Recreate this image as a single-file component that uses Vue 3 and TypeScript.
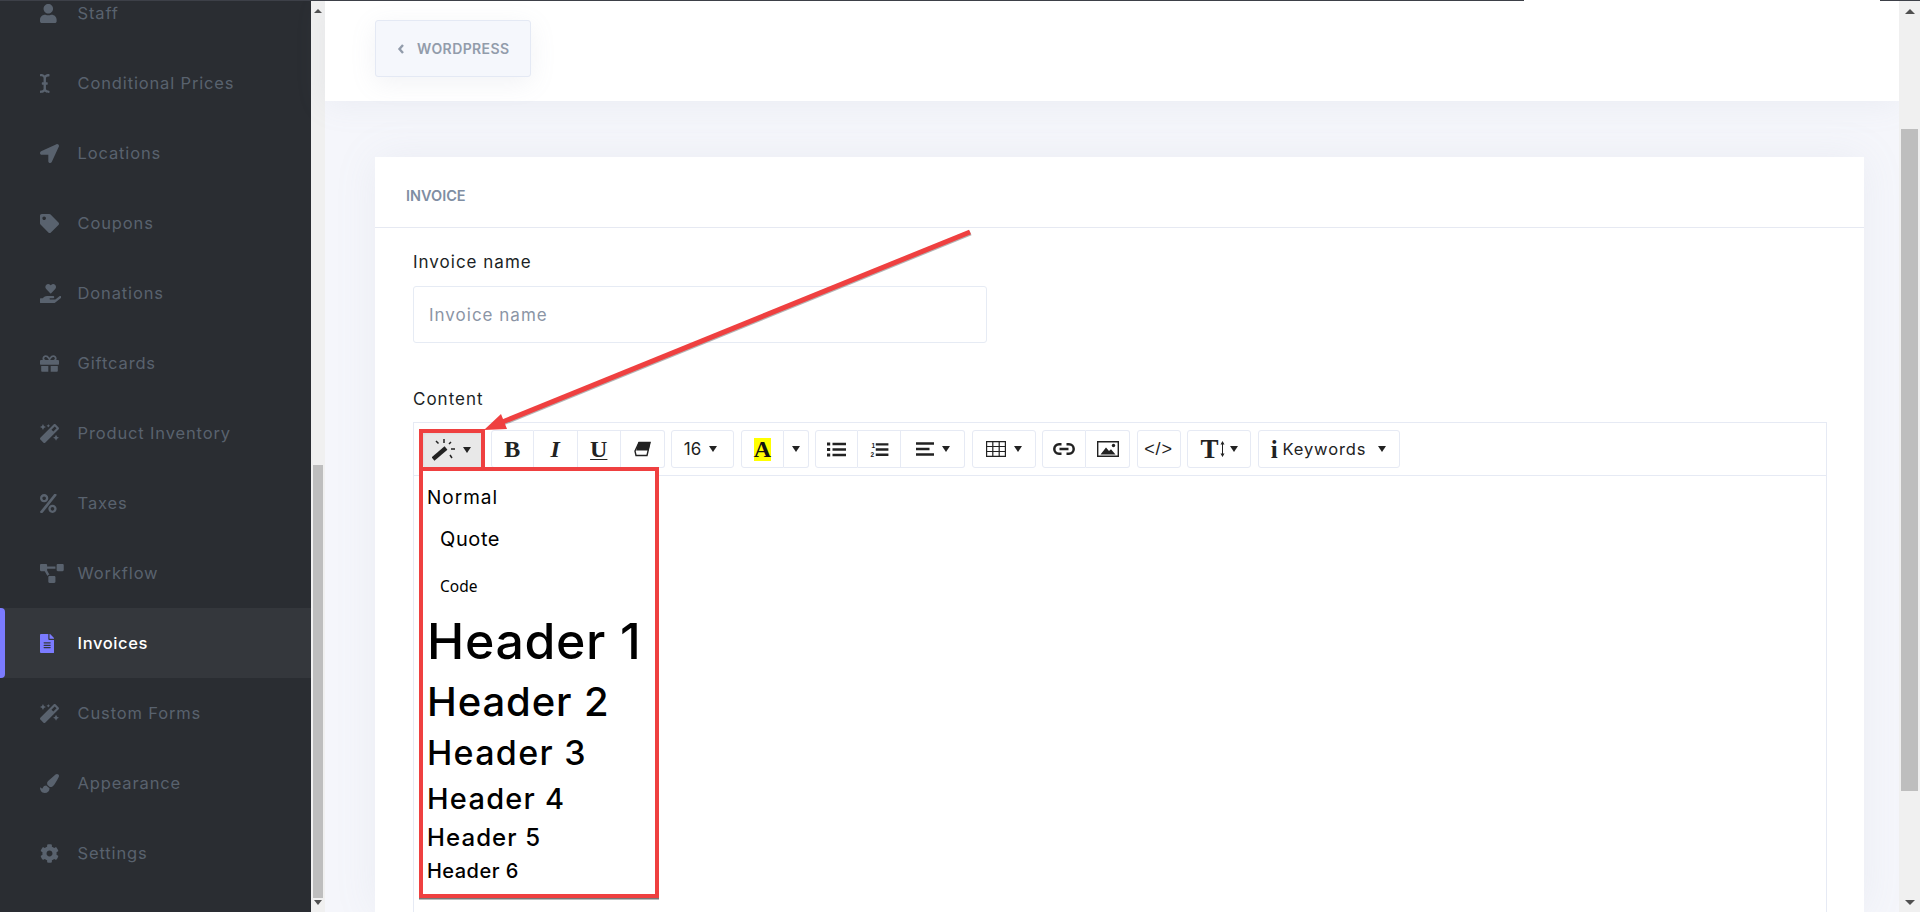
<script setup lang="ts">
interface NavItem { label: string; box: string; d: string; active?: boolean }
const magic = 'M224 96l16-32 32-16-32-16-16-32-16 32-32 16 32 16 16 32zM80 160l26.66-53.33L160 80l-53.34-26.67L80 0 53.34 53.33 0 80l53.34 26.67L80 160zm352 128l-26.66 53.33L352 368l53.34 26.67L432 448l26.66-53.33L512 368l-53.34-26.67L432 288zm70.62-193.77L417.77 9.38C411.53 3.12 403.34 0 395.15 0c-8.19 0-16.38 3.12-22.63 9.38L9.38 372.52c-12.5 12.5-12.5 32.76 0 45.25l84.85 84.85c6.25 6.25 14.44 9.37 22.62 9.37 8.19 0 16.38-3.12 22.63-9.37l363.14-363.15c12.5-12.48 12.5-32.75 0-45.24zM359.45 203.46l-50.91-50.91 86.6-86.6 50.91 50.91-86.6 86.6z'
const nav: NavItem[] = [
  { label: 'Staff', box: '0 0 448 512', d: 'M224 256c70.7 0 128-57.3 128-128S294.7 0 224 0 96 57.3 96 128s57.3 128 128 128zm89.6 32h-16.7c-22.2 10.2-46.9 16-72.9 16s-50.6-5.8-72.9-16h-16.7C60.2 288 0 348.2 0 422.4V464c0 26.5 21.5 48 48 48h352c26.5 0 48-21.5 48-48v-41.6c0-74.2-60.2-134.4-134.4-134.4z' },
  { label: 'Conditional Prices', box: '0 0 256 512', d: 'M256 52.048V12.065C256 5.496 250.726.148 244.158.066 211.621-.344 166.469.011 128 37.959 90.266.736 46.979-.114 11.913.114 5.318.157 0 5.519 0 12.114v39.645c0 6.687 5.458 12.078 12.145 11.998C38.111 63.447 96 67.243 96 112.182V224H60c-6.627 0-12 5.373-12 12v40c0 6.627 5.373 12 12 12h36v112c0 44.932-56.075 48.031-83.95 47.959C5.404 447.942 0 453.306 0 459.952v39.983c0 6.569 5.274 11.917 11.842 11.999 32.537.409 77.689.054 116.158-37.894 37.734 37.223 81.021 38.073 116.087 37.845 6.595-.043 11.913-5.405 11.913-12V460.24c0-6.687-5.458-12.078-12.145-11.998C217.889 448.553 160 444.939 160 400V288h36c6.627 0 12-5.373 12-12v-40c0-6.627-5.373-12-12-12h-36V112.182c0-44.932 56.075-48.213 83.95-48.142 6.646.018 12.05-5.346 12.05-11.992z' },
  { label: 'Locations', box: '0 0 512 512', d: 'M444.52 3.52L28.74 195.42c-47.97 22.39-31.98 92.75 19.19 92.75h175.91v175.91c0 51.17 70.36 67.17 92.75 19.19l191.9-415.78c15.99-38.39-25.59-79.97-63.97-63.97z' },
  { label: 'Coupons', box: '0 0 512 512', d: 'M0 252.118V48C0 21.49 21.49 0 48 0h204.118a48 48 0 0 1 33.941 14.059l211.882 211.882c18.745 18.745 18.745 49.137 0 67.882L293.823 497.941c-18.745 18.745-49.137 18.745-67.882 0L14.059 286.059A48 48 0 0 1 0 252.118zM112 64c-26.51 0-48 21.49-48 48s21.49 48 48 48 48-21.49 48-48-21.49-48-48-48z' },
  { label: 'Donations', box: '0 0 576 512', d: 'M275.3 250.5c7 7.4 18.4 7.4 25.5 0l108.9-114.2c31.6-33.2 29.8-88.2-5.6-118.8-30.8-26.7-76.7-21.9-104.9 7.7L288 36.9l-11.1-11.6C248.7-4.4 202.8-9.2 172 17.5c-35.3 30.6-37.2 85.6-5.6 118.8l108.9 114.2zm290 77.6c-11.8-10.7-30.2-10-42.6 0L430.3 402c-11.3 9.1-25.4 14-40 14H272c-8.8 0-16-7.2-16-16s7.2-16 16-16h78.3c15.9 0 30.7-10.9 33.3-26.6 3.3-20-12.1-37.4-31.6-37.4H192c-27 0-53.1 9.3-74.1 26.3L71.4 384H16c-8.8 0-16 7.2-16 16v96c0 8.8 7.2 16 16 16h356.8c14.5 0 28.6-4.9 40-14L564 377c15.2-12.1 16.4-35.3 1.3-48.9z' },
  { label: 'Giftcards', box: '0 0 512 512', d: 'M32 448c0 17.7 14.3 32 32 32h160V320H32v128zm256 32h160c17.7 0 32-14.3 32-32V320H288v160zm192-320h-42.1c6.2-12.1 10.1-25.5 10.1-40 0-48.5-39.5-88-88-88-41.6 0-68.5 21.3-103 68.3-34.5-47-61.4-68.3-103-68.3-48.5 0-88 39.5-88 88 0 14.5 3.8 27.9 10.1 40H32c-17.7 0-32 14.3-32 32v80c0 8.8 7.2 16 16 16h480c8.8 0 16-7.2 16-16v-80c0-17.7-14.3-32-32-32zm-326.1 0c-22.1 0-40-17.9-40-40s17.9-40 40-40c19.9 0 34.6 3.3 86.1 80h-86.1zm206.1 0h-86.1c51.4-76.5 65.7-80 86.1-80 22.1 0 40 17.9 40 40s-17.9 40-40 40z' },
  { label: 'Product Inventory', box: '0 0 512 512', d: magic },
  { label: 'Taxes', box: '0 0 448 512', d: 'M112 224c61.9 0 112-50.1 112-112S173.9 0 112 0 0 50.1 0 112s50.1 112 112 112zm0-160c26.5 0 48 21.5 48 48s-21.5 48-48 48-48-21.5-48-48 21.5-48 48-48zm224 224c-61.9 0-112 50.1-112 112s50.1 112 112 112 112-50.1 112-112-50.1-112-112-112zm0 160c-26.5 0-48-21.5-48-48s21.5-48 48-48 48 21.5 48 48-21.5 48-48 48zM392.3.2l31.6-.1c19.4-.1 30.9 21.8 19.7 37.8L77.4 501.6a23.95 23.95 0 0 1-19.6 10.2l-33.4.1c-19.5 0-30.9-21.9-19.7-37.8l368-463.7C377.2 4 384.5.2 392.3.2z' },
  { label: 'Workflow', box: '0 0 640 512', d: 'M384 320H256c-17.67 0-32 14.33-32 32v128c0 17.67 14.33 32 32 32h128c17.67 0 32-14.33 32-32V352c0-17.67-14.33-32-32-32zM192 32c0-17.67-14.33-32-32-32H32C14.33 0 0 14.33 0 32v128c0 17.67 14.33 32 32 32h95.72l73.16 128.04C211.98 300.98 232.4 288 256 288h.28L192 175.51V128h224V64H192V32zM608 0H480c-17.67 0-32 14.33-32 32v128c0 17.67 14.33 32 32 32h128c17.67 0 32-14.33 32-32V32c0-17.67-14.33-32-32-32z' },
  { label: 'Invoices', box: '0 0 384 512', active: true, d: 'M224 136V0H24C10.7 0 0 10.7 0 24v464c0 13.3 10.7 24 24 24h336c13.3 0 24-10.7 24-24V160H248c-13.2 0-24-10.8-24-24zm64 236c0 6.6-5.4 12-12 12H108c-6.6 0-12-5.4-12-12v-8c0-6.6 5.4-12 12-12h168c6.6 0 12 5.4 12 12v8zm0-64c0 6.6-5.4 12-12 12H108c-6.6 0-12-5.4-12-12v-8c0-6.6 5.4-12 12-12h168c6.6 0 12 5.4 12 12v8zm0-72v8c0 6.6-5.4 12-12 12H108c-6.6 0-12-5.4-12-12v-8c0-6.6 5.4-12 12-12h168c6.6 0 12 5.4 12 12zm96-114.1v6.1H256V0h6.1c6.4 0 12.5 2.5 17 7l97.9 98c4.5 4.5 7 10.6 7 16.9z' },
  { label: 'Custom Forms', box: '0 0 512 512', d: magic },
  { label: 'Appearance', box: '0 0 512 512', d: 'M167.02 309.34c-40.12 2.58-76.53 17.86-97.19 72.3-2.35 6.21-8 9.98-14.59 9.98-11.11 0-45.46-27.67-55.25-34.35C0 439.62 37.93 512 128 512c75.86 0 128-43.77 128-120.19 0-3.11-.65-6.08-.97-9.13l-88.01-73.34zM457.89 0c-15.16 0-29.37 6.71-40.21 16.45C213.27 199.05 192 203.34 192 257.09c0 13.7 3.25 26.76 8.73 38.7l63.82 53.18c7.21 1.8 14.64 3.03 22.39 3.03 62.11 0 98.11-45.47 211.16-256.46 7.38-14.35 13.9-29.85 13.9-45.99C512 20.64 486 0 457.89 0z' },
  { label: 'Settings', box: '0 0 512 512', d: 'M487.4 315.7l-42.6-24.6c4.3-23.2 4.3-47 0-70.2l42.6-24.6c4.9-2.8 7.1-8.6 5.5-14-11.1-35.6-30-67.8-54.7-94.6-3.8-4.1-10-5.1-14.8-2.3L380.8 110c-17.9-15.4-38.5-27.3-60.8-35.1V25.8c0-5.6-3.9-10.5-9.4-11.7-36.7-8.2-74.3-7.8-109.2 0-5.5 1.2-9.4 6.1-9.4 11.7V75c-22.2 7.9-42.8 19.8-60.8 35.1L88.7 85.5c-4.9-2.8-11-1.9-14.8 2.3-24.7 26.7-43.6 58.9-54.7 94.6-1.7 5.4.6 11.2 5.5 14L67.3 221c-4.3 23.2-4.3 47 0 70.2l-42.6 24.6c-4.9 2.8-7.1 8.6-5.5 14 11.1 35.6 30 67.8 54.7 94.6 3.8 4.1 10 5.1 14.8 2.3l42.6-24.6c17.9 15.4 38.5 27.3 60.8 35.1v49.2c0 5.6 3.9 10.5 9.4 11.7 36.7 8.2 74.3 7.8 109.2 0 5.5-1.2 9.4-6.1 9.4-11.7v-49.2c22.2-7.9 42.8-19.8 60.8-35.1l42.6 24.6c4.9 2.8 11 1.9 14.8-2.3 24.7-26.7 43.6-58.9 54.7-94.6 1.5-5.5-.7-11.3-5.6-14.1zM256 336c-44.1 0-80-35.9-80-80s35.9-80 80-80 80 35.9 80 80-35.9 80-80 80z' }
]
</script>

<template>
  <div class="page">
    <aside class="sidebar">
      <nav class="nav">
        <a v-for="item in nav" :key="item.label" class="nav-row" :class="{ active: item.active }">
          <span class="nav-icon"><svg :viewBox="item.box"><path :d="item.d" fill="currentColor" /></svg></span>
          <span>{{ item.label }}</span>
        </a>
      </nav>
    </aside>
    <div class="bar bar-side"><i class="up"></i><div class="thumb"></div><i class="down"></i></div>

    <main class="main">
      <header class="head">
        <button class="back"><svg viewBox="0 0 8 12"><path d="M6 2 2.5 6 6 10" fill="none" stroke="currentColor" stroke-width="2.4" /></svg>WORDPRESS</button>
      </header>
      <div class="content">
        <section class="card">
          <div class="card-title">INVOICE</div>
          <div class="card-body">
            <label class="lbl">Invoice name</label>
            <div class="input">Invoice name</div>
            <label class="lbl lbl2">Content</label>
            <div class="editor">
              <div class="toolbar">
                <div class="grp"><button class="b on w-style">
                  <svg class="wand" viewBox="0 0 24 24"><path d="M1 21 14 10" stroke="#222" stroke-width="4.4" fill="none" /><path d="M12 1v4M4 3l2.5 2.5M19 11h4M18 17l2 3M19 4l-2 2" stroke="#222" stroke-width="1.5" fill="none" /></svg>
                  <i class="caret caret-w"></i></button></div>
                <div class="grp">
                  <button class="b w-b ser bold">B</button>
                  <button class="b w-b ser ital">I</button>
                  <button class="b w-b ser bold und">U</button>
                  <button class="b w-b"><svg class="ic16" viewBox="0 0 17 16"><path d="M5 1.5h11L13 14.5H2L1 10z" fill="none" stroke="#222" stroke-width="1.4"/><path d="M4.5 1h12l-2 8.5H2.2z" fill="#222"/></svg></button>
                </div>
                <div class="grp"><button class="b w-size"><span class="sz">16</span><i class="caret"></i></button></div>
                <div class="grp">
                  <button class="b w-b"><span class="hl">A</span></button>
                  <button class="b w-c"><i class="caret"></i></button>
                </div>
                <div class="grp">
                  <button class="b w-l"><svg class="ic19" viewBox="0 0 19 14"><path d="M5.5 1.5h13.5M5.5 7h13.5M5.5 12.5h13.5" stroke="#222" stroke-width="2.6"/><path d="M0 0h3.2v3H0zM0 5.5h3.2v3H0zM0 11h3.2v3H0z" fill="#222"/></svg></button>
                  <button class="b w-l"><svg class="ic19" viewBox="0 0 19 16"><path d="M5.5 2.5h13.5M5.5 8h13.5M5.5 13.5h13.5" stroke="#222" stroke-width="2.6"/><text class="nums" x="1" y="6.5">1</text><text class="nums" x="0" y="15.5">2</text></svg></button>
                  <button class="b w-m"><svg class="ic18" viewBox="0 0 18 14"><path d="M0 1.5h18M0 7h13.5M0 12.5h18" stroke="#222" stroke-width="2.6"/></svg><i class="caret"></i></button>
                </div>
                <div class="grp"><button class="b w-m"><svg class="ic20 tbl" viewBox="0 0 20 16"><path d="M.6.6h18.8v14.8H.6zM.6 5.5h18.8M.6 10.5h18.8M6.8.6v14.8M13.2.6v14.8" fill="none" stroke="#222" stroke-width="1.2"/></svg><i class="caret"></i></button></div>
                <div class="grp">
                  <button class="b w-a"><svg class="ic22" viewBox="0 0 22 12"><path d="M8.5 1.3H6a4.7 4.7 0 0 0 0 9.4h2.5M13.5 1.3H16a4.7 4.7 0 0 1 0 9.4h-2.5M6.5 6h9" fill="none" stroke="#222" stroke-width="2.5"/></svg></button>
                  <button class="b w-a"><svg class="ic22 pic" viewBox="0 0 22 16"><path d="M.7.7h20.6v14.6H.7z" fill="none" stroke="#222" stroke-width="1.4"/><path d="M3.5 13.5 9 6.5l3 3.5 2-1.8 4.5 5.3z" fill="#222"/><circle cx="16.5" cy="4.5" r="1.7" fill="#222"/></svg></button>
                </div>
                <div class="grp"><button class="b w-a code">&lt;/&gt;</button></div>
                <div class="grp"><button class="b w-m"><span class="tt">T</span><svg class="ln" viewBox="0 0 5 16"><path d="M2.5 1v14" stroke="#222" stroke-width="1"/><path d="M.5 3.5 2.5 0l2 3.5zM.5 12.5l2 3.5 2-3.5z" fill="#222"/></svg><i class="caret caret-t"></i></button></div>
                <div class="grp"><button class="b w-k"><span class="info">i</span>Keywords<i class="caret caret-k"></i></button></div>
              </div>
              <div class="edit-area"></div>

              <div class="menu">
                <p class="m-normal">Normal</p>
                <blockquote class="m-quote">Quote</blockquote>
                <pre class="m-code">Code</pre>
                <h1>Header 1</h1>
                <h2>Header 2</h2>
                <h3>Header 3</h3>
                <h4>Header 4</h4>
                <h5>Header 5</h5>
                <h6>Header 6</h6>
              </div>
            </div>
          </div>
        </section>
      </div>
    </main>
    <div class="bar bar-main"><i class="up"></i><div class="thumb"></div><i class="down"></i></div>

    <div class="line line-a"></div>
    <div class="line line-b"></div>
    <div class="mark"></div>
    <svg class="arrow" viewBox="0 0 1920 912">
      <g transform="translate(0.6 1)" fill="#777" stroke="#777" opacity=".55"><path d="M970 232 495 425" stroke-width="5" /></g>
      <path d="M970 232 495 425" stroke="#ef4040" stroke-width="5" fill="none" />
      <path d="M484 430 501 414 507 429z" fill="#ef4040" />
    </svg>
  </div>
</template>

<style>
html, body { margin: 0; padding: 0; overflow: hidden; }
</style>

<style scoped>
* { box-sizing: border-box; }
.page { position: relative; display: flex; height: 912px; width: 1920px; overflow: hidden; font-family: Inter, "Liberation Sans", sans-serif; background: #f5f6fb; }

.sidebar { width: 311px; flex: none; background: #2a2d32; overflow: hidden; }
.nav { margin-top: -22px; }
.nav-row { display: flex; align-items: center; height: 70px; padding-left: 40px; font-size: 16.5px; letter-spacing: .85px; color: #59626e; }
.nav-row.active { position: relative; background: #34373c; color: #fff; font-weight: 500; letter-spacing: .6px; }
.nav-row.active::before { content: ""; position: absolute; left: 0; top: 0; bottom: 0; width: 5px; background: #7b7bff; border-radius: 0 4px 4px 0; }
.nav-icon { width: 37.6px; flex: none; display: flex; align-items: center; }
.nav-icon svg { height: 19px; display: block; }
.nav-row.active .nav-icon { color: #7b7bff; }

.bar { position: relative; flex: none; background: #f0f0f0; }
.bar-side { width: 14px; padding: 465px 2px 14px; }
.bar-main { width: 21px; padding: 129px 2px 121px; }
.thumb { height: 100%; background: #bebebe; }
.up, .down { position: absolute; left: 50%; margin-left: -5px; width: 0; height: 0; border-left: 5px solid transparent; border-right: 5px solid transparent; }
.up { top: 9px; border-bottom: 5px solid #505050; }
.down { bottom: 7px; border-top: 5px solid #505050; }
.bar-side .up, .bar-side .down { margin-left: -4px; border-left-width: 4px; border-right-width: 4px; border-bottom-width: 4px; }

.main { flex: 1; min-width: 0; display: flex; flex-direction: column; background: #f5f6fb; }
.head { height: 101px; flex: none; background: #fff; padding: 20px 0 0 50px; box-shadow: 0 4px 30px rgba(150, 155, 175, .1); position: relative; }
.back { width: 156px; height: 57px; display: flex; align-items: center; padding: 0 0 0 21px; background: #f5f7fc; border: 1px solid #e4e9f4; border-radius: 3px; box-shadow: 0 6px 26px rgba(140, 150, 175, .12); color: #929cab; font: 600 14px Inter, sans-serif; letter-spacing: .4px; }
.back svg { width: 8px; height: 12px; margin-right: 12px; }

.content { flex: 1; min-height: 0; padding: 56px 35px 0 50px; }
.card { height: 100%; background: #fff; box-shadow: 0 0 40px rgba(150, 155, 175, .1); overflow: hidden; }
.card-title { height: 71px; padding: 7px 0 0 31px; display: flex; align-items: center; border-bottom: 1px solid #e6e9f2; font-size: 14.5px; font-weight: 600; color: #7f8ea3; }
.card-body { padding: 22px 37px 0 38px; }
.lbl { display: block; height: 24px; line-height: 24px; font-size: 17px; color: #1b1f25; letter-spacing: 1px; }
.lbl2 { margin-top: 44px; }
.input { width: 574px; height: 57px; margin-top: 12px; padding-left: 15px; display: flex; align-items: center; border: 1px solid #e6ebf4; border-radius: 3px; font-size: 17px; color: #8b95a5; letter-spacing: 1px; }

.editor { position: relative; margin-top: 11px; border: 1px solid #e6eaf4; height: 600px; }
.toolbar { display: flex; gap: 6.5px; height: 53px; padding: 7px 0 0 9px; border-bottom: 1px solid #e6eaf4; }
.grp { display: flex; }
.b { display: flex; align-items: center; justify-content: center; height: 38px; padding: 0; background: #fff; border: 1px solid #e6eaf4; border-left-width: 0; color: #222; font: 16px Inter, sans-serif; }
.grp .b:first-child { border-left-width: 1px; border-radius: 3px 0 0 3px; }
.grp .b:last-child { border-radius: 0 3px 3px 0; }
.grp .b:only-child { border-radius: 3px; }
.b.on { background: #e8e8e8; border: 0; border-top: 1px solid #777; border-radius: 0; box-shadow: inset 0 2px 3px rgba(0, 0, 0, .08); }
.w-style { width: 61px; }
.w-b { width: 43.5px; }
.w-size { width: 63px; }
.w-c { width: 24.5px; }
.w-l { width: 43px; }
.w-m { width: 64px; }
.w-a { width: 44px; }
.w-k { width: 142px; }
.b.ser { font-family: "Liberation Serif", serif; font-size: 24px; }
.b.bold { font-weight: 700; }
.b.ital { font-style: italic; font-weight: 700; }
.und { text-decoration: underline; text-underline-offset: 2px; text-decoration-thickness: 1px; }
.caret { display: inline-block; width: 0; height: 0; margin-left: 8px; border-left: 4.5px solid transparent; border-right: 4.5px solid transparent; border-top: 6px solid #222; }
.caret-k { margin-left: 12px; }
.caret-w { margin: 0 4px 0 7px; }
.caret-t { margin-left: 5px !important; }
.w-c .caret { margin-left: 0; }
.wand { width: 24px; height: 24px; }
.ic19 { width: 19px; height: 15px; }
.ic22 { width: 22px; height: 12px; }
.pic { height: 16px; }
.ic20 { width: 20px; height: 16px; }
.ic18 { width: 18px; height: 14px; }
.ic16 { width: 17px; height: 16px; }
.nums { font: 700 7px "Liberation Sans", sans-serif; fill: #222; }
.sz { font-size: 17px; margin-left: -4px; }
.hl { display: block; width: 17px; height: 23px; background: #ff0; color: #111; font: 700 24px/23px "Liberation Serif", serif; text-align: center; }
.code { font: 18px "Liberation Sans", sans-serif; letter-spacing: .8px; }
.tt { font-size: 27px; line-height: 1; font-family: "Liberation Serif", serif; font-weight: 700; }
.ln { width: 5px; height: 16px; margin-left: 1px; }
.w-m .caret { margin-left: 8px; }
.info { margin-right: 4px; font: 700 25px/1 "Liberation Serif", serif; }
.w-k { font-size: 16.5px; letter-spacing: .85px; }
.edit-area { height: 500px; }

.menu { position: absolute; left: 5px; top: 44px; width: 240px; height: 431px; padding-top: 8px; background: #fff; border: 4px solid #ef4040; box-shadow: 0 1.5px 0 #777; color: #000; }
.menu > * { margin: 0; padding: 0 0 0 4px; font-family: Inter, sans-serif; white-space: nowrap; }
.m-normal { height: 36px; line-height: 38px; font-size: 19px; letter-spacing: 1px; }
.m-quote { height: 48px; line-height: 48px; padding-left: 17px !important; font-size: 20px; letter-spacing: .6px; }
.m-code { height: 46px; line-height: 46px; padding-left: 17px !important; font-family: "Noto Sans", sans-serif !important; font-size: 15.5px; }
.menu h1 { height: 66px; line-height: 64px; font-size: 50px; font-weight: 500; letter-spacing: .65px; }
.menu h2 { height: 52px; line-height: 54px; font-size: 40px; font-weight: 500; letter-spacing: .9px; }
.menu h3 { height: 50px; line-height: 52px; font-size: 34px; font-weight: 500; letter-spacing: 1.3px; }
.menu h4 { height: 42px; line-height: 44px; font-size: 29px; font-weight: 500; letter-spacing: 1.25px; }
.menu h5 { height: 38px; line-height: 38px; font-size: 24px; font-weight: 500; letter-spacing: 1.1px; }
.menu h6 { height: 28px; line-height: 29px; font-size: 20px; font-weight: 500; letter-spacing: .47px; }

.line { position: absolute; top: 0; height: 1px; background: #3d4048; }
.line-a { left: 0; width: 1524px; }
.line-b { left: 1880px; width: 40px; }
.mark { position: absolute; left: 419px; top: 429px; width: 66px; height: 42px; border: 4px solid #ef4040; }
.arrow { position: absolute; left: 0; top: 0; width: 1920px; height: 912px; pointer-events: none; }
</style>
